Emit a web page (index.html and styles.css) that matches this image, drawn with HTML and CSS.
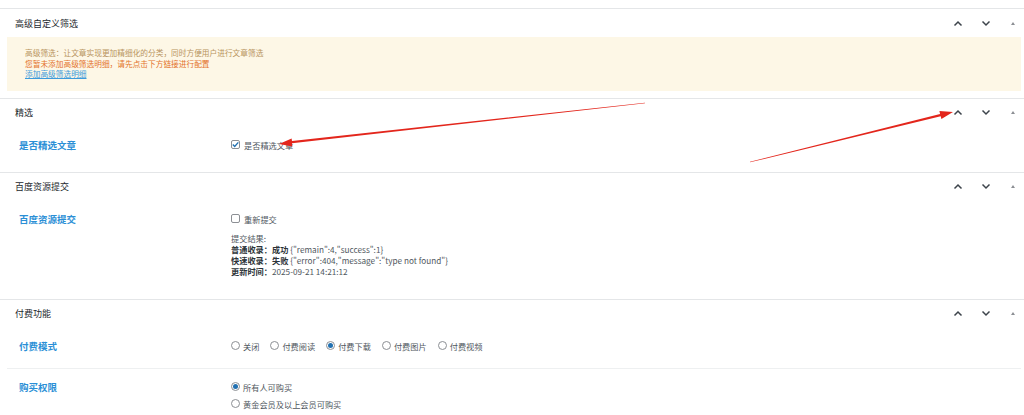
FILE: index.html
```html
<!DOCTYPE html>
<html lang="zh-CN">
<head>
    <meta charset="UTF-8">
    <title>文章设置</title>
    <link rel="stylesheet" href="styles.css">
</head>
<body>
    <div class="boxes">
        <!-- 高级自定义筛选 -->
        <section class="postbox">
            <div class="postbox-head">
                <h2>高级自定义筛选</h2>
                <div class="handles">
                    <span class="handle"><svg width="10" height="7" viewBox="0 0 10 7"><path d="M1.5 5.5 L5 2 L8.5 5.5" fill="none" stroke="#3c434a" stroke-width="1.5"/></svg></span>
                    <span class="handle"><svg width="10" height="7" viewBox="0 0 10 7"><path d="M1.5 1.5 L5 5 L8.5 1.5" fill="none" stroke="#3c434a" stroke-width="1.5"/></svg></span>
                    <span class="handle"><span class="tri"></span></span>
                </div>
            </div>
            <div class="notice">
                <p class="muted">高级筛选：让文章实现更加精细化的分类，同时方便用户进行文章筛选</p>
                <p class="warn">您暂未添加高级筛选明细，请先点击下方链接进行配置</p>
                <p><a href="#">添加高级筛选明细</a></p>
            </div>
        </section>

        <!-- 精选 -->
        <section class="postbox">
            <div class="postbox-head">
                <h2>精选</h2>
                <div class="handles">
                    <span class="handle"><svg width="10" height="7" viewBox="0 0 10 7"><path d="M1.5 5.5 L5 2 L8.5 5.5" fill="none" stroke="#3c434a" stroke-width="1.5"/></svg></span>
                    <span class="handle"><svg width="10" height="7" viewBox="0 0 10 7"><path d="M1.5 1.5 L5 5 L8.5 1.5" fill="none" stroke="#3c434a" stroke-width="1.5"/></svg></span>
                    <span class="handle"><span class="tri"></span></span>
                </div>
            </div>
            <div class="field-row">
                <div class="field-label">是否精选文章</div>
                <div class="field-body">
                    <label class="check"><span class="box checked"><svg width="9" height="9" viewBox="0 0 9 9"><path d="M1.8 4.6 L3.7 6.4 L7.3 2.4" fill="none" stroke="#2271b1" stroke-width="1.4"/></svg></span>是否精选文章</label>
                </div>
            </div>
        </section>

        <!-- 百度资源提交 -->
        <section class="postbox">
            <div class="postbox-head">
                <h2>百度资源提交</h2>
                <div class="handles">
                    <span class="handle"><svg width="10" height="7" viewBox="0 0 10 7"><path d="M1.5 5.5 L5 2 L8.5 5.5" fill="none" stroke="#3c434a" stroke-width="1.5"/></svg></span>
                    <span class="handle"><svg width="10" height="7" viewBox="0 0 10 7"><path d="M1.5 1.5 L5 5 L8.5 1.5" fill="none" stroke="#3c434a" stroke-width="1.5"/></svg></span>
                    <span class="handle"><span class="tri"></span></span>
                </div>
            </div>
            <div class="field-row">
                <div class="field-label">百度资源提交</div>
                <div class="field-body">
                    <label class="check"><span class="box"></span>重新提交</label>
                    <div class="results">
                        <p>提交结果:</p>
                        <p><b>普通收录：成功</b> {"remain":4,"success":1}</p>
                        <p><b>快速收录：失败</b> {"error":404,"message":"type not found"}</p>
                        <p><b>更新时间：</b>2025-09-21 14:21:12</p>
                    </div>
                </div>
            </div>
        </section>

        <!-- 付费功能 -->
        <section class="postbox">
            <div class="postbox-head">
                <h2>付费功能</h2>
                <div class="handles">
                    <span class="handle"><svg width="10" height="7" viewBox="0 0 10 7"><path d="M1.5 5.5 L5 2 L8.5 5.5" fill="none" stroke="#3c434a" stroke-width="1.5"/></svg></span>
                    <span class="handle"><svg width="10" height="7" viewBox="0 0 10 7"><path d="M1.5 1.5 L5 5 L8.5 1.5" fill="none" stroke="#3c434a" stroke-width="1.5"/></svg></span>
                    <span class="handle"><span class="tri"></span></span>
                </div>
            </div>
            <div class="field-row">
                <div class="field-label">付费模式</div>
                <div class="field-body radios-inline">
                    <label class="radio"><span class="dot"></span>关闭</label>
                    <label class="radio"><span class="dot"></span>付费阅读</label>
                    <label class="radio"><span class="dot on"></span>付费下载</label>
                    <label class="radio"><span class="dot"></span>付费图片</label>
                    <label class="radio"><span class="dot"></span>付费视频</label>
                </div>
            </div>
            <div class="field-row">
                <div class="field-label">购买权限</div>
                <div class="field-body radios-stack">
                    <label class="radio"><span class="dot on"></span>所有人可购买</label>
                    <label class="radio"><span class="dot"></span>黄金会员及以上会员可购买</label>
                </div>
            </div>
        </section>
    </div>

    <!-- 标注箭头 -->
    <svg class="marks" width="1024" height="415" viewBox="0 0 1024 415">
        <polygon points="645,102.7 292,140.9 291.6,138.4 279,144 292.4,146.6 292,143.3 645,103.3" fill="#e3261c"/>
        <polygon points="750,161.7 940.1,113.9 939.4,111.1 953,112 941.4,119 940.7,116.3 750,162.3" fill="#e3261c"/>
    </svg>
</body>
</html>
```

FILE: styles.css
```css
body, html {
    margin: 0;
    padding: 0;
    background-color: #fff;
    font-family: "Noto Sans CJK SC", "Noto Sans", sans-serif;
    color: #3c434a;
}

body {
    position: relative;
    height: 415px;
    overflow: hidden;
}

.boxes {
    padding-top: 8px;
}

.postbox {
    border-top: 1px solid #e4e6e8;
    padding-bottom: 5px;
}

.postbox-head {
    height: 28px;
    display: flex;
    align-items: center;
    justify-content: space-between;
    padding: 0 1px 0 15px;
}

.postbox-head h2 {
    margin: 0;
    font-size: 9px;
    font-weight: 400;
    color: #23282d;
}

.handles {
    display: flex;
    column-gap: 7.5px;
}

.handle {
    width: 20px;
    height: 12px;
    display: flex;
    align-items: center;
    justify-content: center;
}

.tri {
    width: 0;
    height: 0;
    border-left: 2.5px solid transparent;
    border-right: 2.5px solid transparent;
    border-bottom: 3.5px solid #8c8f94;
}

/* notice box */
.notice {
    margin: 0 3px 2px 7px;
    padding: 11px 18px;
    background-color: #fdf7e6;
    font-size: 7.7px;
    line-height: 10.5px;
}

.notice p {
    margin: 0;
}

.notice .muted {
    color: #b8945e;
}

.notice .warn {
    color: #e3722a;
}

.notice a {
    color: #3c9bdc;
}

/* fields */
.field-row {
    display: flex;
    margin: 0 3px 0 7px;
    padding: 12px 0 16px;
}

.field-row + .field-row {
    border-top: 1px solid #eef0f1;
}

.field-label {
    width: 224px;
    padding-left: 12px;
    box-sizing: border-box;
    font-size: 9.5px;
    line-height: 12px;
    font-weight: 700;
    color: #2b8fd6;
}

.field-body {
    font-size: 8.2px;
    line-height: 12px;
    color: #50575e;
}

.check, .radio {
    display: flex;
    align-items: center;
    gap: 4px;
}

.radio {
    gap: 3px;
}

.box {
    width: 9px;
    height: 9px;
    box-sizing: border-box;
    border: 1px solid #8c8f94;
    border-radius: 2px;
    background: #fff;
    display: flex;
    align-items: center;
    justify-content: center;
}

.box svg {
    flex: none;
}

.results {
    margin-top: 8px;
    line-height: 11.3px;
}

.results p {
    margin: 0;
}

.results b {
    color: #2c3338;
}

.radios-inline {
    display: flex;
    gap: 11px;
}

.radios-stack {
    display: flex;
    flex-direction: column;
    row-gap: 5px;
}

.dot {
    width: 9px;
    height: 9px;
    box-sizing: border-box;
    border: 1px solid #8c8f94;
    border-radius: 50%;
    display: flex;
    align-items: center;
    justify-content: center;
}

.dot.on::after {
    content: "";
    width: 5px;
    height: 5px;
    border-radius: 50%;
    background-color: #2271b1;
}

.marks {
    position: absolute;
    top: 0;
    left: 0;
    pointer-events: none;
}
```
